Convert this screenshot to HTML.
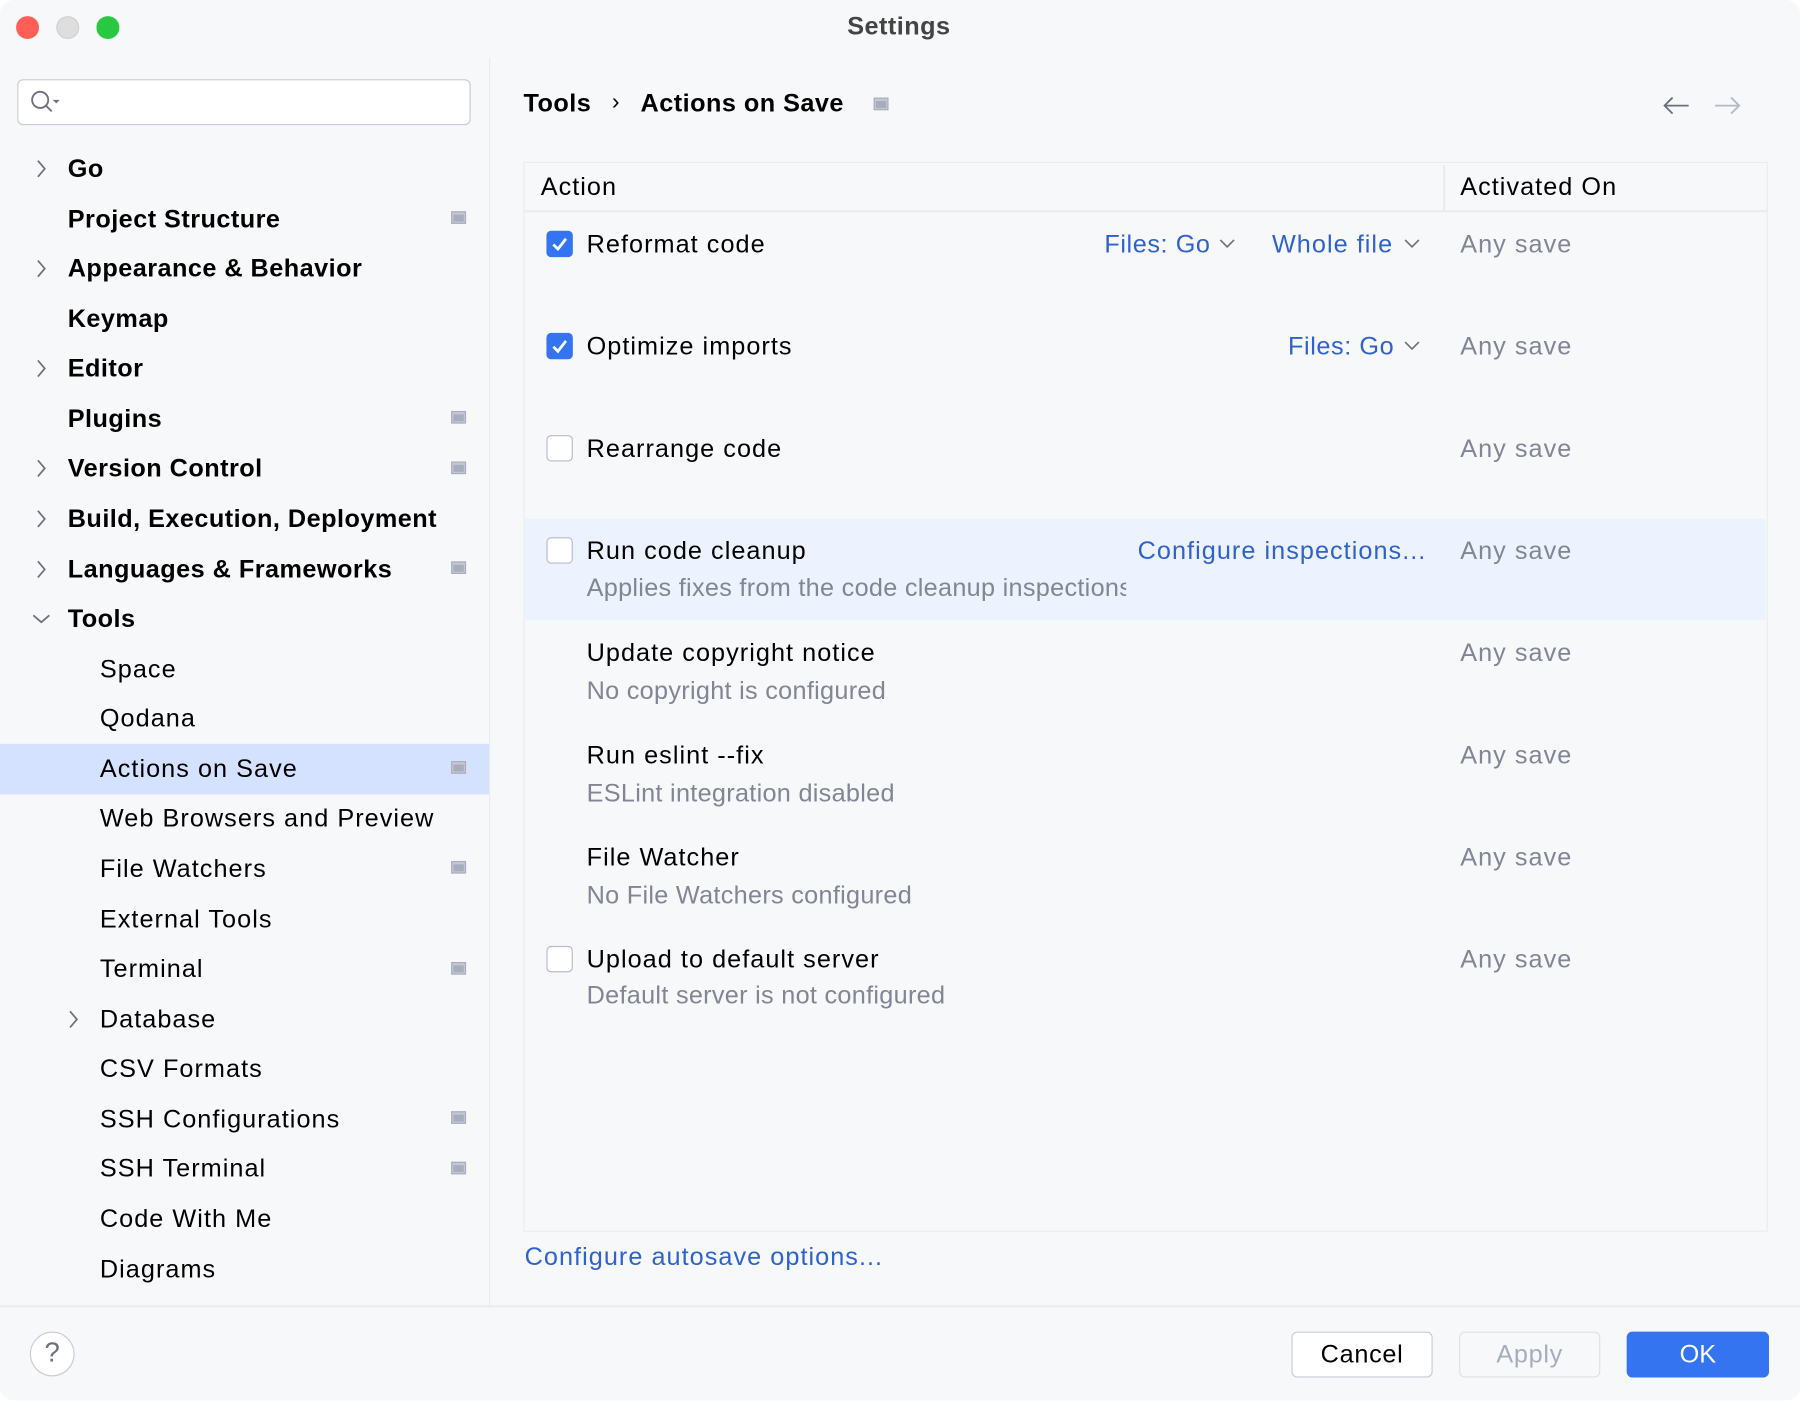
<!DOCTYPE html>
<html><head><meta charset="utf-8"><style>
html,body{margin:0;padding:0;width:1800px;height:1400px;overflow:hidden;background:#fff}
#w{position:absolute;left:0;top:0;width:1568px;height:1220px;transform:scale(1.14796);transform-origin:0 0;background:#f7f8fa;border-radius:12px;overflow:hidden;font-family:"Liberation Sans",sans-serif;color:#000}
.a{position:absolute;white-space:nowrap}
.t{position:absolute;white-space:nowrap;font-size:22px;height:30px;line-height:30px;letter-spacing:0.9px}
.b{font-weight:bold;letter-spacing:0.4px}
.g{color:#818594}
.sub{letter-spacing:0.25px}
.ln{color:#2f62cc}
.pin{position:absolute;width:13px;height:11px;border:1.5px solid #a8adbd;box-sizing:border-box;background:#c4c8d4}
.pin:after{content:"";position:absolute;left:1px;top:2px;right:1px;bottom:1px;background:#a8adbd}
.cb{position:absolute;left:476px;width:23px;height:23px;border-radius:4px;box-sizing:border-box}
.on{background:#3574f0}
.off{border:1.5px solid #b8bcc8;background:#fff}
</style></head><body><div id="w">
<div class="a" style="left:14px;top:14px;width:20px;height:20px;border-radius:50%;background:#ff5f57"></div>
<div class="a" style="left:49px;top:14px;width:20px;height:20px;border-radius:50%;background:#dedede;box-sizing:border-box;border:1px solid #cfcfcf"></div>
<div class="a" style="left:84px;top:14px;width:20px;height:20px;border-radius:50%;background:#28c840"></div>
<div class="t b" style="left:0;width:1566px;text-align:center;top:8px;color:#444">Settings</div>

<div class="a" style="left:426px;top:50px;width:1px;height:1088px;background:#ebecf0"></div>
<div class="a" style="left:15px;top:69px;width:395px;height:40px;border:1.5px solid #c9ccd6;border-radius:5px;background:#fff;box-sizing:border-box"></div>
<svg class="a" style="left:25px;top:78px" width="30" height="24"><circle cx="10" cy="9" r="7" fill="none" stroke="#6c707e" stroke-width="1.6"/><path d="M15 14l5 5" stroke="#6c707e" stroke-width="1.6"/><path d="M21 9h6l-3 3z" fill="#6c707e"/></svg>

<svg class="a" style="left:29px;top:138px" width="14" height="18"><path d="M4 2l6 7-6 7" fill="none" stroke="#6c707e" stroke-width="1.5"/></svg>
<div class="t b" style="left:59px;top:132px">Go</div>
<div class="t b" style="left:59px;top:176px">Project Structure</div><div class="pin" style="left:393px;top:184px"></div>
<svg class="a" style="left:29px;top:225px" width="14" height="18"><path d="M4 2l6 7-6 7" fill="none" stroke="#6c707e" stroke-width="1.5"/></svg>
<div class="t b" style="left:59px;top:219px">Appearance &amp; Behavior</div>
<div class="t b" style="left:59px;top:263px">Keymap</div>
<svg class="a" style="left:29px;top:312px" width="14" height="18"><path d="M4 2l6 7-6 7" fill="none" stroke="#6c707e" stroke-width="1.5"/></svg>
<div class="t b" style="left:59px;top:306px">Editor</div>
<div class="t b" style="left:59px;top:350px">Plugins</div><div class="pin" style="left:393px;top:358px"></div>
<svg class="a" style="left:29px;top:399px" width="14" height="18"><path d="M4 2l6 7-6 7" fill="none" stroke="#6c707e" stroke-width="1.5"/></svg>
<div class="t b" style="left:59px;top:393px">Version Control</div><div class="pin" style="left:393px;top:402px"></div>
<svg class="a" style="left:29px;top:443px" width="14" height="18"><path d="M4 2l6 7-6 7" fill="none" stroke="#6c707e" stroke-width="1.5"/></svg>
<div class="t b" style="left:59px;top:437px">Build, Execution, Deployment</div>
<svg class="a" style="left:29px;top:487px" width="14" height="18"><path d="M4 2l6 7-6 7" fill="none" stroke="#6c707e" stroke-width="1.5"/></svg>
<div class="t b" style="left:59px;top:481px">Languages &amp; Frameworks</div><div class="pin" style="left:393px;top:489px"></div>
<svg class="a" style="left:27px;top:532px" width="18" height="14"><path d="M2 4l7 6 7-6" fill="none" stroke="#6c707e" stroke-width="1.5"/></svg>
<div class="t b" style="left:59px;top:524px">Tools</div>
<div class="t" style="left:87px;top:568px">Space</div>
<div class="t" style="left:87px;top:611px">Qodana</div>
<div class="a" style="left:0;top:648px;width:426px;height:44px;background:#d4e2ff"></div>
<div class="t" style="left:87px;top:655px">Actions on Save</div><div class="pin" style="left:393px;top:663px"></div>
<div class="t" style="left:87px;top:698px">Web Browsers and Preview</div>
<div class="t" style="left:87px;top:742px">File Watchers</div><div class="pin" style="left:393px;top:750px"></div>
<div class="t" style="left:87px;top:786px">External Tools</div>
<div class="t" style="left:87px;top:829px">Terminal</div><div class="pin" style="left:393px;top:838px"></div>
<svg class="a" style="left:57px;top:879px" width="14" height="18"><path d="M4 2l6 7-6 7" fill="none" stroke="#6c707e" stroke-width="1.5"/></svg>
<div class="t" style="left:87px;top:873px">Database</div>
<div class="t" style="left:87px;top:916px">CSV Formats</div>
<div class="t" style="left:87px;top:960px">SSH Configurations</div><div class="pin" style="left:393px;top:968px"></div>
<div class="t" style="left:87px;top:1003px">SSH Terminal</div><div class="pin" style="left:393px;top:1012px"></div>
<div class="t" style="left:87px;top:1047px">Code With Me</div>
<div class="t" style="left:87px;top:1091px">Diagrams</div>

<div class="t b" style="left:456px;top:75px">Tools</div>
<div class="t" style="left:533px;top:74px;font-size:20px">›</div>
<div class="t b" style="left:558px;top:75px">Actions on Save</div>
<div class="pin" style="left:761px;top:85px"></div>
<svg class="a" style="left:1447px;top:81px" width="80" height="22"><path d="M24 11H3M10 4l-7 7 7 7" fill="none" stroke="#6c707e" stroke-width="1.6"/><path d="M47 11h21M61 4l7 7-7 7" fill="none" stroke="#b4b8c4" stroke-width="1.6"/></svg>

<div class="a" style="left:456px;top:141px;width:1084px;height:932px;border:1.5px solid #ebecf0;box-sizing:border-box"></div>
<div class="a" style="left:456px;top:183px;width:1084px;height:2px;background:#ebecf0"></div>
<div class="a" style="left:1257px;top:144px;width:1.5px;height:39px;background:#ebecf0"></div>
<div class="t" style="left:471px;top:148px">Action</div>
<div class="t" style="left:1272px;top:148px">Activated On</div>

<div class="a" style="left:457px;top:452px;width:1081px;height:88px;background:#edf3fe"></div>

<div class="cb on" style="top:201px"><svg width="23" height="23"><path d="M6 12l4 4 7-9" fill="none" stroke="#fff" stroke-width="2.4"/></svg></div>
<div class="t" style="left:511px;top:198px">Reformat code</div>
<div class="t ln" style="left:962px;top:198px;letter-spacing:0.5px">Files: Go</div>
<svg class="a" style="left:1062px;top:206px" width="14" height="12"><path d="M1 3l6 6 6-6" fill="none" stroke="#6c707e" stroke-width="1.4"/></svg>
<div class="t ln" style="left:1108px;top:198px">Whole file</div>
<svg class="a" style="left:1223px;top:206px" width="14" height="12"><path d="M1 3l6 6 6-6" fill="none" stroke="#6c707e" stroke-width="1.4"/></svg>
<div class="t g" style="left:1272px;top:198px">Any save</div>

<div class="cb on" style="top:290px"><svg width="23" height="23"><path d="M6 12l4 4 7-9" fill="none" stroke="#fff" stroke-width="2.4"/></svg></div>
<div class="t" style="left:511px;top:287px">Optimize imports</div>
<div class="t ln" style="left:1122px;top:287px;letter-spacing:0.5px">Files: Go</div>
<svg class="a" style="left:1223px;top:295px" width="14" height="12"><path d="M1 3l6 6 6-6" fill="none" stroke="#6c707e" stroke-width="1.4"/></svg>
<div class="t g" style="left:1272px;top:287px">Any save</div>

<div class="cb off" style="top:379px"></div>
<div class="t" style="left:511px;top:376px">Rearrange code</div>
<div class="t g" style="left:1272px;top:376px">Any save</div>

<div class="cb off" style="top:468px"></div>
<div class="t" style="left:511px;top:465px">Run code cleanup</div>
<div class="t ln" style="left:991px;top:465px">Configure inspections...</div>
<div class="t g" style="left:1272px;top:465px">Any save</div>
<div class="t g sub" style="left:511px;top:497px;width:470px;overflow:hidden">Applies fixes from the code cleanup inspections</div>

<div class="t" style="left:511px;top:554px">Update copyright notice</div>
<div class="t g" style="left:1272px;top:554px">Any save</div>
<div class="t g sub" style="left:511px;top:587px">No copyright is configured</div>

<div class="t" style="left:511px;top:643px">Run eslint --fix</div>
<div class="t g" style="left:1272px;top:643px">Any save</div>
<div class="t g sub" style="left:511px;top:676px">ESLint integration disabled</div>

<div class="t" style="left:511px;top:732px">File Watcher</div>
<div class="t g" style="left:1272px;top:732px">Any save</div>
<div class="t g sub" style="left:511px;top:765px">No File Watchers configured</div>

<div class="cb off" style="top:824px"></div>
<div class="t" style="left:511px;top:821px">Upload to default server</div>
<div class="t g" style="left:1272px;top:821px">Any save</div>
<div class="t g sub" style="left:511px;top:852px">Default server is not configured</div>

<div class="t ln" style="left:457px;top:1080px">Configure autosave options...</div>

<div class="a" style="left:0;top:1137px;width:1568px;height:1.5px;background:#ebecf0"></div>
<div class="a" style="left:26px;top:1160px;width:39px;height:39px;border-radius:50%;border:1.5px solid #c9ccd6;background:#fff;box-sizing:border-box;text-align:center;line-height:36px;font-size:24px;color:#6c707e">?</div>
<div class="a" style="left:1125px;top:1160px;width:123px;height:40px;border:1.5px solid #c9ccd6;border-radius:5px;background:#fff;box-sizing:border-box;text-align:center;line-height:37px;font-size:22px;letter-spacing:0.6px">Cancel</div>
<div class="a" style="left:1271px;top:1160px;width:123px;height:40px;border:1.5px solid #dfe1e5;border-radius:5px;box-sizing:border-box;text-align:center;line-height:37px;font-size:22px;color:#a8adbd;letter-spacing:0.6px">Apply</div>
<div class="a" style="left:1417px;top:1160px;width:124px;height:40px;border-radius:5px;background:#3574f0;text-align:center;line-height:40px;font-size:22px;color:#fff">OK</div>
</div></body></html>
